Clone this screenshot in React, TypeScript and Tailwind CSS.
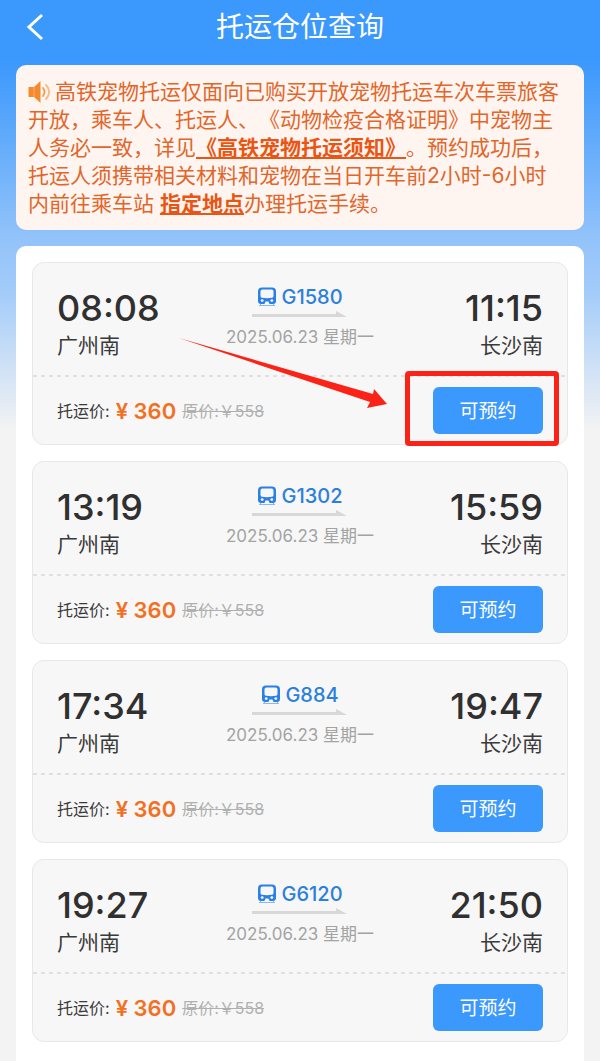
interface Train {
  no: string;
  depart: string;
  arrive: string;
  highlighted?: boolean;
}

const trains: Train[] = [
  { no: "G1580", depart: "08:08", arrive: "11:15", highlighted: true },
  { no: "G1302", depart: "13:19", arrive: "15:59" },
  { no: "G884", depart: "17:34", arrive: "19:47" },
  { no: "G6120", depart: "19:27", arrive: "21:50" },
];

function SpeakerIcon() {
  return (
    <svg className="mr-1 inline-block h-6 w-[23px] align-[-5px]" viewBox="0 0 23 24" fill="none">
      <path d="M0.500 7H6l6.500-6v22L6 17H0.500z" fill="#f58a2c" />
      <path d="M6 7v10" stroke="#fbb06a" strokeWidth="1" />
      <path d="M15 8c1.800 2.300 1.800 5.700 0 8" stroke="#f79a4b" strokeWidth="1.800" strokeLinecap="round" />
      <path d="M18 5c4 4 4 10 0 14" stroke="#fab987" strokeWidth="1.800" strokeLinecap="round" />
    </svg>
  );
}

function TrainIcon() {
  return (
    <svg className="h-5 w-5 shrink-0" viewBox="0 0 20 20" fill="none">
      <path
        fillRule="evenodd"
        clipRule="evenodd"
        d="M5 0.500h10A4 4 0 0 1 19 4.500V14a3 3 0 0 1-3 3H4a3 3 0 0 1-3-3V4.500A4 4 0 0 1 5 0.500zM5.500 2.500A2 2 0 0 0 3.500 4.500v4.500q0 1.500 1.500 1.700q5 0.900 10 0q1.500-0.200 1.500-1.700V4.500A2 2 0 0 0 14.500 2.500z"
        fill="#2b80e8"
      />
      <path d="M7.500 17l1-2.500h3l1 2.500z" fill="#f7f7f7" />
      <circle cx="5.200" cy="13.600" r="1.400" fill="#f7f7f7" />
      <circle cx="14.800" cy="13.600" r="1.400" fill="#f7f7f7" />
      <path d="M4 17l-2 2M16 17l2 2M3 18.500h14" stroke="#8bb8ee" strokeWidth="1" />
    </svg>
  );
}

function TrainCard({ train }: { train: Train }) {
  return (
    <li className="rounded-xl border border-[#e6e8ea] bg-[#f7f7f7]">
      {/* Times and stations */}
      <div className="flex justify-between px-6 pt-6 pb-3.5">
        <div className="flex flex-1 flex-col gap-0.5">
          <span className="text-[36px] leading-[42px] font-medium text-[#303030]">{train.depart}</span>
          <span className="text-[21px] leading-[30px] text-[#3a3a3a]">广州南</span>
        </div>
        <div className="flex flex-col items-center">
          <div className="flex items-center gap-1">
            <TrainIcon />
            <span className="text-[20px] leading-5 font-medium text-[#2b80dc]">{train.no}</span>
          </div>
          <svg className="mt-1 h-2 w-24" viewBox="0 0 96 8" fill="#d8d8d8">
            <path d="M0 3h84V0l11 6H0z" />
          </svg>
          <span className="mt-1.5 text-[17px] leading-6 text-[#a3a3a3]">2025.06.23 星期一</span>
        </div>
        <div className="flex flex-1 flex-col items-end gap-0.5">
          <span className="text-[36px] leading-[42px] font-medium text-[#303030]">{train.arrive}</span>
          <span className="text-[21px] leading-[30px] text-[#3a3a3a]">长沙南</span>
        </div>
      </div>

      <div className="h-0.5 bg-[repeating-linear-gradient(90deg,#e0e0e0_0px,#e0e0e0_4px,transparent_4px,transparent_8px)]" />

      {/* Price and booking */}
      <div className="flex items-center justify-between px-6 py-[10px]">
        <p className="flex items-center gap-1.5">
          <span className="text-[16px] leading-6 text-[#3a3a3a]">托运价:</span>
          <span className="text-[22px] leading-6 font-semibold text-[#f37022]">¥ 360</span>
          <del className="text-[16px] leading-6 text-[#b0b0b0]">原价:￥558</del>
        </p>
        <div className="relative flex">
          <button type="button" className="h-[47px] w-[110px] rounded-md bg-[#3b98fc] pt-1 text-[19px] text-white">
            可预约
          </button>
          {train.highlighted && (
            <>
              <span className="pointer-events-none absolute -top-4 -right-4 -bottom-3 -left-7 rounded-sm border-5 border-[#fb2318]" />
              <svg
                className="pointer-events-none absolute right-[156px] bottom-6 h-[72px] w-[208px]"
                viewBox="0 0 208 72"
                fill="#fb2318"
              >
                <path d="M0 0L194 56L195 51L208 66L188 70L191 64Z" />
              </svg>
            </>
          )}
        </div>
      </div>
    </li>
  );
}

export default function App() {
  return (
    <div className="flex min-h-screen flex-col bg-[#f3f3f3] bg-[linear-gradient(#3b98fc_0px,#3b98fc_60px,#93c3fa_240px,#a2cbf9_290px,#f3f3f3_430px)] px-4 font-['Inter','Noto_Sans_CJK_SC',sans-serif]">
      <header className="grid h-[65px] grid-cols-[40px_1fr_40px] pb-3">
        <button type="button" aria-label="返回" className="flex items-center pl-2 text-white">
          <svg className="h-7 w-6" viewBox="0 0 24 28" fill="none" stroke="currentColor" strokeWidth="3">
            <path d="M18 2L5 14l13 12" />
          </svg>
        </button>
        <h1 className="self-center text-center text-[28px] leading-10 text-white">托运仓位查询</h1>
      </header>

      <p className="rounded-[10px] bg-[#fff5f0] pt-[13px] pr-5 pb-3 pl-3 text-[21px] leading-7 text-[#e2662b] [text-spacing-trim:space-all]">
        <SpeakerIcon />
        高铁宠物托运仅面向已购买开放宠物托运车次车票旅客开放，乘车人、托运人、《动物检疫合格证明》中宠物主人务必一致，详见
        <a href="#notice" className="font-bold text-[#ea5514] underline">
          《高铁宠物托运须知》
        </a>
        。预约成功后，托运人须携带相关材料和宠物在当日开车前2小时-6小时内前往乘车站{" "}
        <a href="#place" className="font-bold text-[#ea5514] underline">
          指定地点
        </a>
        办理托运手续。
      </p>

      <main className="mt-4 flex-1 rounded-t-[10px] bg-white px-4 pt-4 pb-5">
        <ul className="flex flex-col gap-4">
          {trains.map((train) => (
            <TrainCard key={train.no} train={train} />
          ))}
        </ul>
      </main>
    </div>
  );
}
